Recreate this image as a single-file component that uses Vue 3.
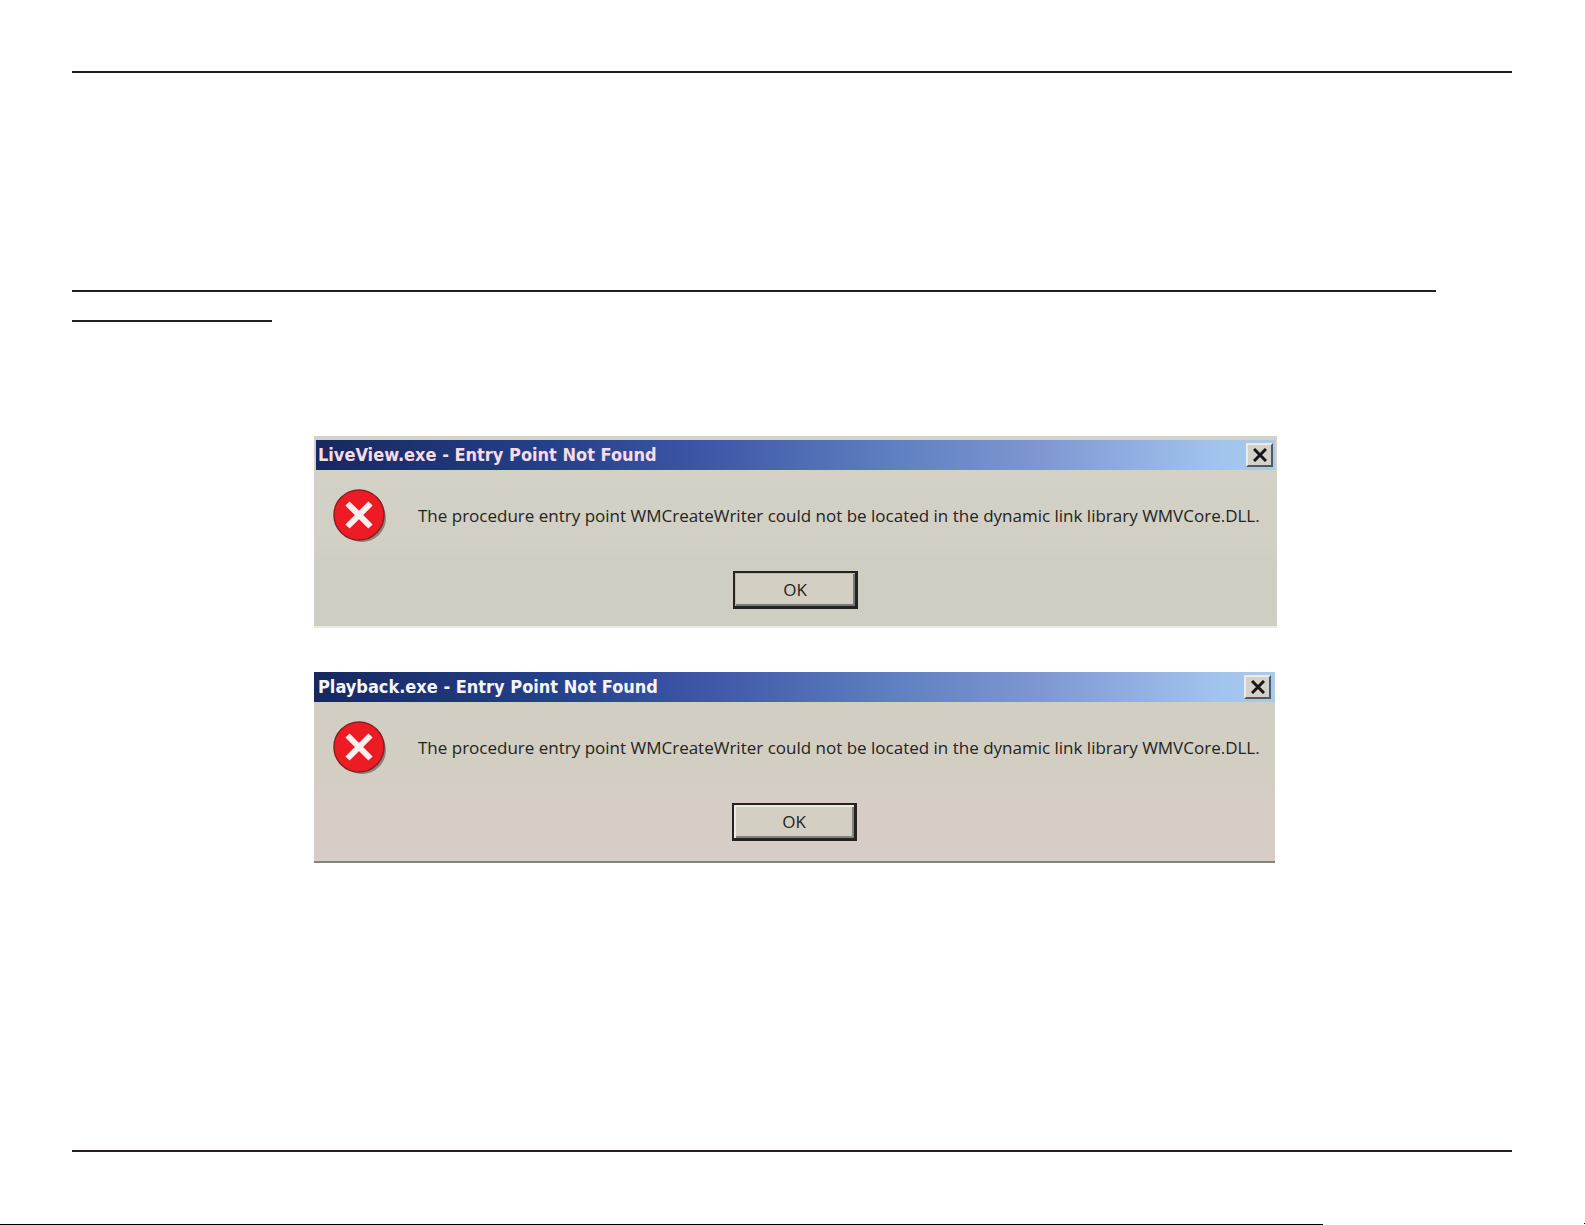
<template>
  <div class="page">
    <main class="sheet">
      <hr class="rule" />
      <div class="underlines">
        <hr class="rule long" />
        <hr class="rule short" />
      </div>
      <div class="dialogs">
        <section
          v-for="dialog in dialogs"
          :key="dialog.program"
          class="dialog"
          :class="dialog.theme"
          role="dialog"
          :aria-labelledby="dialog.theme + '-title'"
        >
          <header class="titlebar">
            <h2 :id="dialog.theme + '-title'">{{ dialog.program }} - Entry Point Not Found</h2>
            <button type="button" class="close" aria-label="Close">
              <svg width="14" height="14" viewBox="0 0 14 14" aria-hidden="true">
                <path d="M1 1 L13 13 M13 1 L1 13" stroke="#171717" stroke-width="3" />
              </svg>
            </button>
          </header>
          <div class="message">
            <svg class="errorIcon" width="54" height="54" viewBox="0 0 54 54" aria-hidden="true">
              <circle cx="29" cy="29" r="24" fill="#85877d" />
              <circle cx="26" cy="26" r="25" fill="#ed1c24" stroke="#87201f" stroke-width="1.5" />
              <path d="M14.5 14.5 L37.5 37.5 M37.5 14.5 L14.5 37.5" stroke="#fff0f0" stroke-width="6" />
            </svg>
            <p>
              The procedure entry point WMCreateWriter could not be located in the dynamic link
              library WMVCore.DLL.
            </p>
          </div>
          <button type="button" class="ok">OK</button>
        </section>
      </div>
      <hr class="rule bottom" />
    </main>
    <footer class="edge">
      <span class="edgeLine"></span>
      <span class="edgeMark"></span>
    </footer>
  </div>
</template>

<script setup>
const dialogs = [
  { program: 'LiveView.exe', theme: 'live' },
  { program: 'Playback.exe', theme: 'playback' }
]
</script>

<style>
body {
  margin: 0;
  background: #fff;
}
</style>

<style scoped>
.page {
  display: flex;
  flex-direction: column;
  min-height: 100vh;
  font-family: 'Open Sans', 'Noto Sans', sans-serif;
}

.sheet {
  display: flex;
  flex: 1;
  flex-direction: column;
  padding: 71px 73px 71px 72px;
}

.rule {
  width: 100%;
  height: 2px;
  margin: 0;
  border: 0;
  background: #231f20;
}

.underlines {
  display: flex;
  flex-direction: column;
  gap: 28px;
  margin-top: 217px;
}

.long {
  width: calc(100% - 76px);
}

.short {
  width: 200px;
}

.dialogs {
  display: flex;
  flex-direction: column;
  gap: 44px;
  margin-top: 114px;
  padding-left: 242px;
}

.dialog {
  display: flex;
  flex-direction: column;
  box-sizing: border-box;
  width: 100%;
  color: #242321;
}

.live {
  max-width: 963px;
  padding-top: 4px;
  border-bottom: 2px solid #f5e7dc;
  background: linear-gradient(#d4d1c8 0, #d2d0c4 110px, #cfcec2 125px);
}

.playback {
  max-width: 961px;
  padding-bottom: 3px;
  border-bottom: 2px solid #85827c;
  background: linear-gradient(#d3cec3 0, #d2cec2 100px, #d5cdc6 125px);
}

.titlebar {
  display: flex;
  align-items: center;
  justify-content: space-between;
  height: 30px;
  padding: 0 4px;
  background: linear-gradient(90deg, #17285f 0%, #24418c 25%, #4059a9 42%, #5e7fc0 60%, #7f98d3 76%, #a1c4ed 94%, #a9caed 100%);
}

.live .titlebar {
  margin: 0 2px;
  padding: 0 2px;
}

h2 {
  margin: 0;
  color: #f6f5fc;
  font-family: 'DejaVu Sans Condensed', 'DejaVu Sans', sans-serif;
  font-size: 18px;
  font-weight: 700;
  line-height: 24px;
}

.live h2 {
  color: #f7dce6;
}

.close {
  display: flex;
  align-items: center;
  justify-content: center;
  width: 27px;
  height: 24px;
  padding: 0;
  border: 2px solid;
  border-color: #eeeae5 #4e5967 #4e5967 #eeeae5;
  background: #d5d0c8;
}

.message {
  display: flex;
  align-items: center;
  gap: 31px;
  padding: 19px 0 0 19px;
}

.errorIcon {
  flex: none;
}

p {
  margin: 0;
  font-size: 17px;
  line-height: 24px;
}

.ok {
  align-self: center;
  width: 125px;
  height: 38px;
  margin: 28px 0 17px;
  padding: 0;
  border: 2px solid #252321;
  border-right-width: 3px;
  border-bottom-width: 3px;
  background: #d3d0c3;
  box-shadow: inset 2px 2px #eeeae3, inset -2px -2px #85827b;
  color: inherit;
  font: inherit;
  font-size: 17px;
}

.live .ok {
  box-shadow: inset 1px 1px #e6a99c, inset -2px -2px #777b75;
}

.bottom {
  margin-top: auto;
}

.edge {
  display: flex;
  justify-content: space-between;
  height: 2px;
}

.edgeLine {
  align-self: flex-end;
  width: calc(100% - 262px);
  height: 1px;
  background: #000;
}

.edgeMark {
  width: 1px;
  height: 1px;
  background: #000;
}
</style>
